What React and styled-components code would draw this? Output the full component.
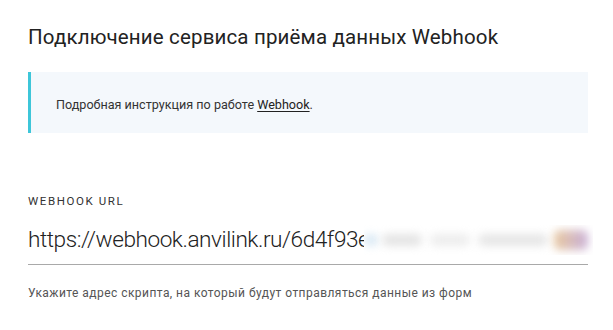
import React from "react";
import styled, { createGlobalStyle } from "styled-components";

const Global = createGlobalStyle`
  html, body { margin: 0; padding: 0; background: #ffffff; }
  body { font-family: Roboto, "Liberation Sans", sans-serif; color: #222; }
`;

const Page = styled.div`
  width: 613px;
  height: 330px;
  box-sizing: border-box;
  padding: 24px 25px 0 28px;
  display: flex;
  flex-direction: column;
  overflow: hidden;
`;

const Title = styled.h1`
  margin: 0;
  font-size: 20.5px;
  line-height: 26px;
  font-weight: 400;
  color: #222;
  letter-spacing: 0.15px;
`;

const Note = styled.div`
  margin-top: 22px;
  height: 61px;
  box-sizing: border-box;
  border-left: 3px solid #3ec6d9;
  background: #f4f8fc;
  display: flex;
  align-items: center;
  padding: 4px 0 0 25px;
  font-size: 12.6px;
  color: #333;
`;

const NoteLink = styled.a`
  color: #222;
  text-decoration: underline;
  text-underline-offset: 2px;
`;

const Field = styled.div`
  margin-top: 61px;
  display: flex;
  flex-direction: column;
`;

const Label = styled.div`
  font-size: 11.5px;
  line-height: 14px;
  letter-spacing: 1.6px;
  text-transform: uppercase;
  color: #333;
`;

const InputRow = styled.div`
  margin-top: 17px;
  height: 39px;
  display: flex;
  align-items: flex-start;
  border-bottom: 1px solid #a9a9a9;
  position: relative;
`;

const UrlText = styled.span`
  font-size: 22.6px;
  line-height: 30px;
  font-weight: 300;
  letter-spacing: -0.45px;
  color: #222;
  white-space: nowrap;
`;

const Redact = styled.span`
  position: absolute;
  left: 336px;
  top: 0;
  width: 229px;
  height: 30px;
  background: #fff;
  overflow: hidden;
`;

const Smudge = styled.span`
  position: absolute;
  top: 9px;
  height: 12px;
  border-radius: 6px;
  filter: blur(4px);
  background: ${(p) => p.$bg};
`;

const Hint = styled.div`
  margin-top: 21px;
  font-size: 12px;
  letter-spacing: 0.45px;
  color: #555;
`;

export default function App() {
  return (
    <>
      <Global />
      <Page>
        <Title>Подключение сервиса приёма данных Webhook</Title>
        <Note>
          <span>
            Подробная инструкция по работе <NoteLink href="#">Webhook</NoteLink>.
          </span>
        </Note>
        <Field>
          <Label>Webhook URL</Label>
          <InputRow>
            <UrlText>https://webhook.anvilink.ru/6d4f93e</UrlText>
            <Redact>
              <Smudge $bg="#d8e8f4" style={{ left: 0, width: 14 }} />
              <Smudge $bg="#e4e4e4" style={{ left: 18, width: 40 }} />
              <Smudge $bg="#ededed" style={{ left: 66, width: 40 }} />
              <Smudge $bg="#e6e6e6" style={{ left: 114, width: 70 }} />
              <Smudge $bg="linear-gradient(90deg,#e8c9a0,#c9b0d8)" style={{ left: 190, width: 34, top: 5, height: 20 }} />
            </Redact>
          </InputRow>
          <Hint>Укажите адрес скрипта, на который будут отправляться данные из форм</Hint>
        </Field>
      </Page>
    </>
  );
}
